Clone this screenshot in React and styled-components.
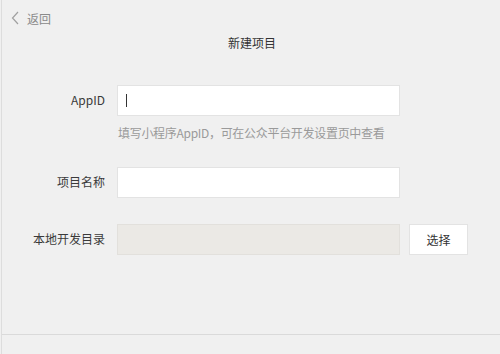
import React from "react";
import styled, { createGlobalStyle } from "styled-components";

const GlobalStyle = createGlobalStyle`
  html, body {
    margin: 0;
    padding: 0;
    background: #f0f0f0;
  }
  body {
    font-family: "Noto Sans CJK SC", "Liberation Sans", sans-serif;
  }
`;

const Window = styled.div`
  width: 500px;
  height: 354px;
  box-sizing: border-box;
  background: #f0f0f0;
  border-left: 1px solid #dddddd;
  margin-left: 1px;
  display: flex;
  flex-direction: column;
`;

const TopBar = styled.div`
  height: 36px;
  padding: 11px 0 0 9px;
  box-sizing: border-box;
  display: flex;
  align-items: flex-start;
`;

const BackLink = styled.div`
  display: flex;
  align-items: center;
  gap: 8px;
  height: 14px;
  font-size: 12px;
  color: #8a8a8a;
  cursor: pointer;
`;

const Title = styled.div`
  text-align: center;
  font-size: 12px;
  color: #333;
  line-height: 14px;
  padding-left: 1px;
`;

const Form = styled.div`
  display: flex;
  flex-direction: column;
  margin-top: 35px;
`;

const Row = styled.div`
  display: flex;
  align-items: center;
  gap: 12px;
  margin-top: ${(p) => p.$top || 0}px;
`;

const Label = styled.div`
  width: 103px;
  text-align: right;
  font-size: 12px;
  color: #3a3a3a;
  padding-bottom: 2px;
`;

const Field = styled.div`
  width: 283px;
  height: 31px;
  box-sizing: border-box;
  border: 1px solid ${(p) => (p.$disabled ? "#e2e0dc" : "#e3e3e3")};
  background: ${(p) => (p.$disabled ? "#ebe9e5" : "#ffffff")};
  display: flex;
  align-items: center;
  padding-left: 8px;
`;

const Caret = styled.span`
  width: 1px;
  height: 13px;
  background: #333;
`;

const Hint = styled.div`
  margin: 9px 0 0 116px;
  font-size: 12px;
  letter-spacing: -0.3px;
  color: #9a9a9a;
  line-height: 16px;
`;

const Button = styled.button`
  width: 59px;
  height: 31px;
  margin-left: -3px;
  box-sizing: border-box;
  border: 1px solid #e3e3e3;
  background: #fff;
  font-family: inherit;
  font-size: 12px;
  color: #333;
  padding: 0;
  cursor: pointer;
`;

const Spacer = styled.div`
  flex: 1;
`;

const Footer = styled.div`
  height: 19px;
  border-top: 1px solid #dadada;
`;

const Chevron = () => (
  <svg width="8" height="14" viewBox="0 0 8 14">
    <path d="M7 1 L1.5 7 L7 13" fill="none" stroke="#a0a0a0" strokeWidth="1.2" />
  </svg>
);

export default function App() {
  return (
    <>
      <GlobalStyle />
      <Window>
        <TopBar>
          <BackLink>
            <Chevron />
            <span>返回</span>
          </BackLink>
        </TopBar>
        <Title>新建项目</Title>
        <Form>
          <Row>
            <Label>AppID</Label>
            <Field>
              <Caret />
            </Field>
          </Row>
          <Hint>填写小程序AppID，可在公众平台开发设置页中查看</Hint>
          <Row $top={26}>
            <Label>项目名称</Label>
            <Field />
          </Row>
          <Row $top={26}>
            <Label>本地开发目录</Label>
            <Field $disabled />
            <Button>选择</Button>
          </Row>
        </Form>
        <Spacer />
        <Footer />
      </Window>
    </>
  );
}
